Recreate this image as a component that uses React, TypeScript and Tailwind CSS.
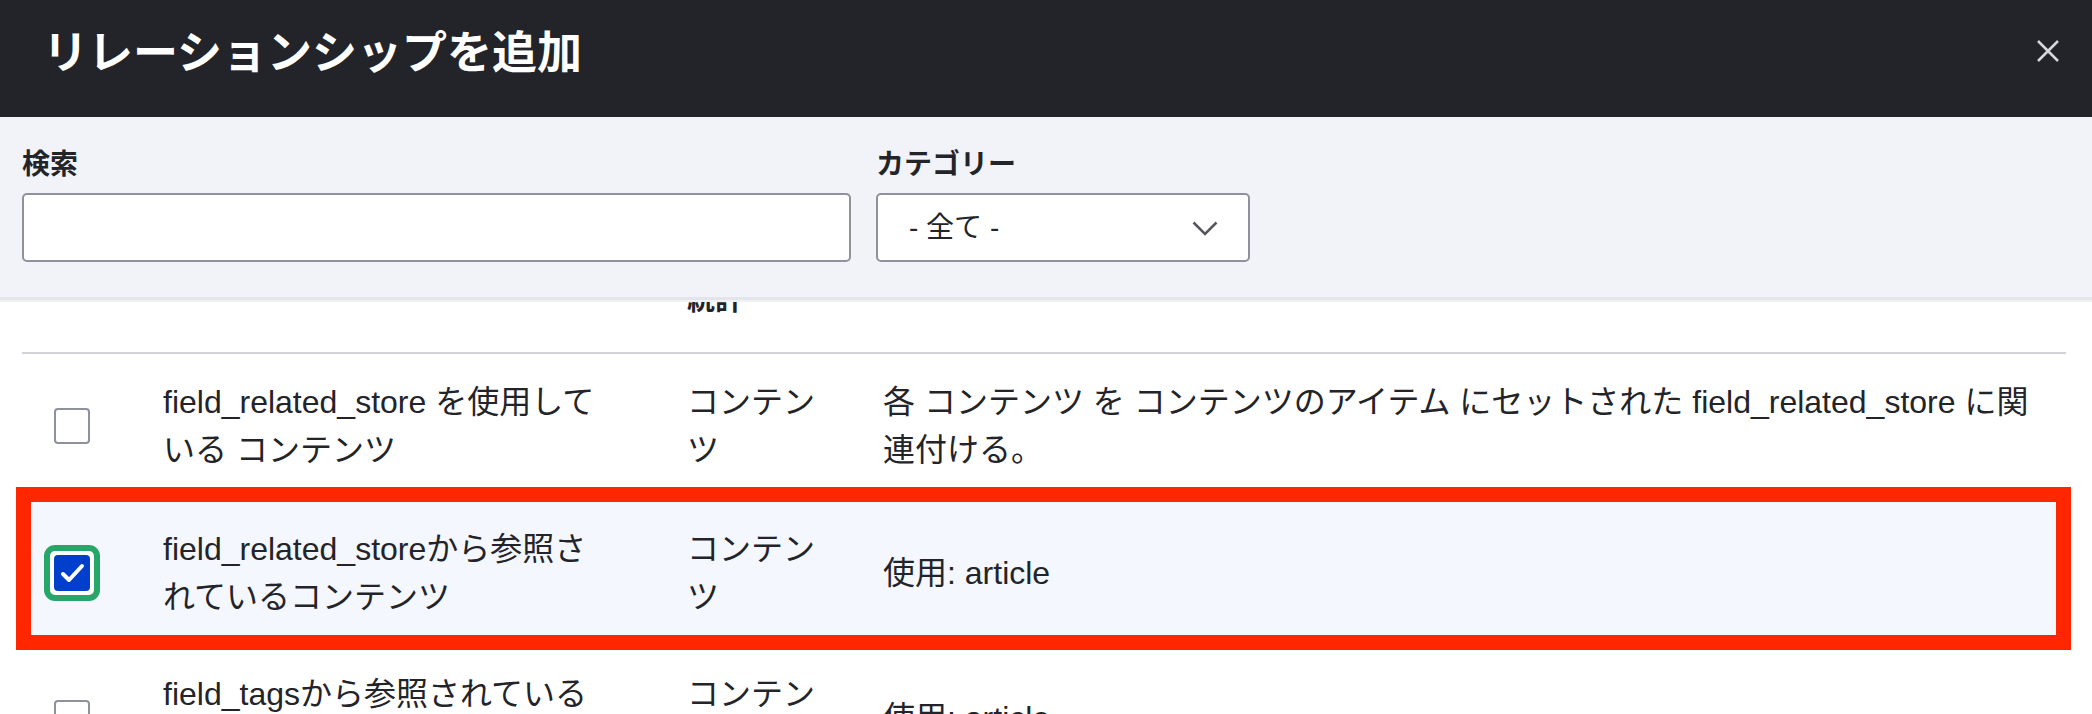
import { ReactNode } from 'react'

// Relationship picker dialog ("リレーションシップを追加")

interface RelationshipRow {
  id: string
  title: string
  category: string
  description: string
  checked?: boolean
  highlighted?: boolean
}

const rows: RelationshipRow[] = [
  {
    id: 'uses_related_store',
    title: 'field_related_store を使用している コンテンツ',
    category: 'コンテンツ',
    description:
      '各 コンテンツ を コンテンツのアイテム にセットされた field_related_store に関連付ける。',
  },
  {
    id: 'ref_related_store',
    title: 'field_related_storeから参照されているコンテンツ',
    category: 'コンテンツ',
    description: '使用: article',
    checked: true,
    highlighted: true,
  },
  {
    id: 'ref_tags',
    title: 'field_tagsから参照されているコンテンツ',
    category: 'コンテンツ',
    description: '使用: article',
  },
]

function Checkbox({ checked }: { checked?: boolean }) {
  if (!checked) {
    return <span className="block w-[36px] h-[36px] rounded-[4px] border-2 border-[#8e929c] bg-white" />
  }
  // focused + checked state: green focus ring round the blue box
  return (
    <span className="block w-fit rounded-[11px] border-[6px] border-[#26a769] bg-white p-[4px]">
      <span className="flex w-[36px] h-[36px] items-center justify-center rounded-[4px] bg-[#003ecc]">
        <svg width="36" height="36" viewBox="0 0 36 36" fill="none">
          <path
            d="M9 19 L15 25 L28 11"
            stroke="white"
            strokeWidth="4"
            strokeLinecap="round"
            strokeLinejoin="round"
          />
        </svg>
      </span>
    </span>
  )
}

function Cells({ row }: { row: RelationshipRow }) {
  return (
    <>
      <div className="w-[444px] mr-[80px]">{row.title}</div>
      <div className="w-[140px] mr-[56px]">{row.category}</div>
      <div className="pr-[20px]">{row.description}</div>
    </>
  )
}

function Row({ row, className }: { row: RelationshipRow; className?: string }) {
  if (row.highlighted) {
    return (
      <div className="-ml-[6px] -mr-[5px] border-[15px] border-[#ff2600] bg-[#f4f7fe]">
        <div className="grid grid-cols-[132px_524px_196px_1fr] items-center pt-[23px] pb-[14px]">
          <div className="pl-[13px]">
            <Checkbox checked={row.checked} />
          </div>
          <Cells row={row} />
        </div>
      </div>
    )
  }
  return (
    <div className={`grid grid-cols-[141px_524px_196px_1fr] items-center ${className ?? ''}`}>
      <div className="pl-[32px]">
        <Checkbox checked={row.checked} />
      </div>
      <Cells row={row} />
    </div>
  )
}

function Field({ label, children }: { label: string; children: ReactNode }) {
  return (
    <div className="flex flex-col gap-[10px]">
      <label className="text-[28px] leading-[36px] font-bold text-[#232429]">{label}</label>
      {children}
    </div>
  )
}

export default function App() {
  return (
    <div className="w-[2092px] h-[714px] overflow-hidden bg-white flex flex-col font-['Liberation_Sans','Noto_Sans_CJK_JP',sans-serif] text-[#232429]">
      {/* タイトルバー */}
      <header className="h-[117px] shrink-0 bg-[#232429] flex items-center justify-between pl-[43px] pr-[33px] pb-[10px]">
        <h1 className="text-[45px] leading-[56px] font-semibold text-white">リレーションシップを追加</h1>
        <button type="button" className="mt-[-6px]" aria-label="閉じる">
          <svg width="22" height="22" viewBox="0 0 22 22" fill="none">
            <path d="M1 1 L21 21 M21 1 L1 21" stroke="#d8d8dc" strokeWidth="2.5" />
          </svg>
        </button>
      </header>

      {/* フィルター */}
      <div className="h-[183px] shrink-0 bg-[#f2f3f8] border-b-[3px] border-[#e4e5ea] px-[22px] pt-[30px] flex gap-[25px]">
        <Field label="検索">
          <input
            type="text"
            className="w-[829px] h-[69px] rounded-[5px] border-2 border-[#8e929c] bg-white px-[20px] text-[28px] outline-none"
          />
        </Field>
        <Field label="カテゴリー">
          <div className="w-[374px] h-[69px] rounded-[5px] border-2 border-[#8e929c] bg-white flex items-center justify-between pl-[31px] pr-[30px]">
            <span className="text-[28px]">- 全て -</span>
            <svg width="26" height="15" viewBox="0 0 26 15" fill="none" className="mt-[2px]">
              <path d="M1.5 1.5 L13 13 L24.5 1.5" stroke="#55565b" strokeWidth="2.5" />
            </svg>
          </div>
        </Field>
      </div>
      <div className="h-[2px] shrink-0 bg-[#f0f1f5]" />

      {/* 一覧（ヘッダー行はフィルターの下にスクロールされている） */}
      <div className="flex-1 overflow-hidden pl-[22px] pr-[26px] text-[32px] leading-[48px]">
        <div className="-mt-[22px] grid grid-cols-[141px_524px_196px_1fr] border-b-2 border-[#d3d4d9] pb-[30px] text-[28px] leading-[42px] font-bold">
          <div />
          <div />
          <div>統計</div>
          <div />
        </div>
        <Row row={rows[0]} className="pt-[24px] pb-[13px]" />
        <Row row={rows[1]} />
        <Row row={rows[2]} className="pt-[20px]" />
      </div>
    </div>
  )
}
